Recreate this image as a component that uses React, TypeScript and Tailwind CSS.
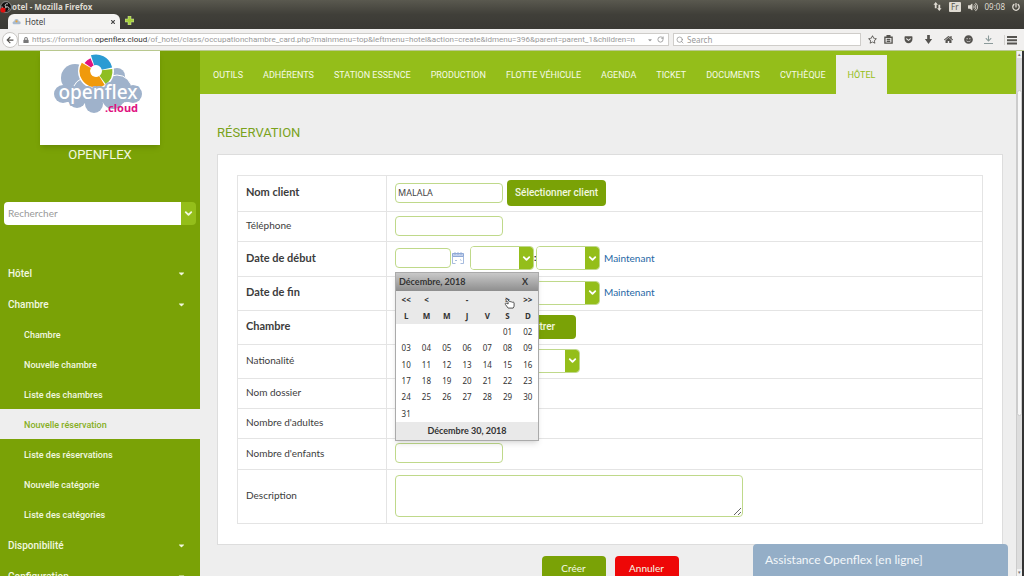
import type { ReactNode } from 'react';
import {
  FaArrowDown,
  FaArrowLeft,
  FaCaretDown,
  FaGetPocket,
  FaHome,
  FaLock,
  FaPowerOff,
  FaRegStar,
  FaSmile,
  FaTimes,
  FaVolumeUp,
} from 'react-icons/fa';
import { ChevronDown, RotateCw, Search } from 'lucide-react';

const topLinks = [
  'Outils',
  'Adhérents',
  'Station essence',
  'Production',
  'Flotte véhicule',
  'Agenda',
  'Ticket',
  'Documents',
  'CVthèque',
  'Hôtel',
];

const roomLinks = [
  'Chambre',
  'Nouvelle chambre',
  'Liste des chambres',
  'Nouvelle réservation',
  'Liste des réservations',
  'Nouvelle catégorie',
  'Liste des catégories',
];

const weekDays = ['L', 'M', 'M', 'J', 'V', 'S', 'D'];

const weeks = [
  ['', '', '', '', '', '01', '02'],
  ['03', '04', '05', '06', '07', '08', '09'],
  ['10', '11', '12', '13', '14', '15', '16'],
  ['17', '18', '19', '20', '21', '22', '23'],
  ['24', '25', '26', '27', '28', '29', '30'],
  ['31', '', '', '', '', '', ''],
];

const inputStyle = "h-5 rounded border border-[#bfd98a] bg-white px-[2px] font-['Noto_Sans',sans-serif] text-[9px] text-[#444] outline-none";

function TitleBar() {
  return (
    <header className="bg-gradient-to-b from-[#5a594f] via-[#403f39] to-[#3a3935] text-[#dfdbd2]">
      <div className="flex h-[13px] items-center justify-between pr-1">
        <div className="flex items-center">
          <svg viewBox="0 0 12 12" className="size-3">
            <circle cx="6" cy="6" r="5.4" fill="#111" stroke="#c8c8c8" strokeWidth=".6" />
            <path d="M6 6C4 4 6 2 8 3M6 6c3-1 4 2 2 3.5M6 6c-1 3-4 2-4-.5" fill="none" stroke="#d8d8d8" strokeWidth="1" />
            <circle cx="3" cy="9" r="2.6" fill="#e01010" />
          </svg>
          <span className="text-[8px] font-bold">otel - Mozilla Firefox</span>
        </div>
        <div className="flex items-center gap-[7px] text-[8px]">
          <svg viewBox="0 0 10 10" className="size-[9px]" fill="currentColor">
            <path d="M3 0l2.5 3H4v4H2V3H.5zM7 10L4.5 7H6V3h2v4h1.500z" />
          </svg>
          <span className="rounded-[1px] bg-[#dfdbd2] px-[2px] leading-[10px] text-[#55534c]">Fr</span>
          <FaVolumeUp className="size-[10px]" />
          <span>09:08</span>
          <FaPowerOff className="size-2" />
        </div>
      </div>
      <div className="flex h-4 items-end pl-2">
        <div className="flex h-[15px] w-[112px] items-center gap-1 rounded-t-md bg-[#f4f3f2] px-1 text-[8px] text-[#444]">
          <svg viewBox="0 0 12 8" className="w-[9px]">
            <path d="M1 6a2 2 0 012-3 3 3 0 016 0 2 2 0 011 4H2z" fill="#a9bbcf" />
            <circle cx="6" cy="3" r="1.500" fill="#e8a33a" />
          </svg>
          <span className="flex-1">Hotel</span>
          <FaTimes className="size-[6px]" />
        </div>
        <button aria-label="Nouvel onglet" className="mb-1 ml-[5px]">
          <svg viewBox="0 0 9 9" className="size-[9px]">
            <path d="M3 0h3v3h3v3H6v3H3V6H0V3h3z" fill="#a6cf3c" stroke="#d5e8a4" strokeWidth=".5" />
          </svg>
        </button>
      </div>
    </header>
  );
}

function ToolBar() {
  return (
    <div className="flex h-[22px] items-center border-b border-[#b9c98f] bg-[#f1f0ef] pl-[2px] text-[#55534f]">
      <button aria-label="Retour" className="flex size-4 items-center justify-center rounded-full border border-[#c9c7c4] bg-white">
        <FaArrowLeft className="size-2" />
      </button>
      <div className="flex h-[13px] min-w-0 flex-1 items-center border border-[#cfcdca] bg-white px-1 text-[8px] text-[#9a9a9a]">
        <FaLock className="mr-[3px] size-[6px] shrink-0 text-[#777]" />
        <span className="min-w-0 flex-1 overflow-hidden font-[Roboto,sans-serif] whitespace-nowrap">
          https://formation.<span className="text-[#333]">openflex.cloud</span>
          /of_hotel/class/occupationchambre_card.php?mainmenu=top&amp;leftmenu=hotel&amp;action=create&amp;idmenu=396&amp;parent=parent_1&amp;children=n
        </span>
        <FaCaretDown className="ml-1 size-[6px] shrink-0" />
        <RotateCw className="ml-1 size-[7px] shrink-0" strokeWidth={3} />
      </div>
      <label className="ml-1 flex h-[13px] w-[188px] items-center gap-[3px] border border-[#cfcdca] bg-white px-[2px]">
        <Search className="size-2 text-[#888]" />
        <input aria-label="Search" placeholder="Search" className="min-w-0 flex-1 text-[8px] outline-none placeholder:text-[#999]" />
      </label>
      <div className="flex items-center gap-[11px] px-[7px]">
        <FaRegStar className="-mr-1 size-[9px]" />
        <svg viewBox="0 0 10 10" className="size-[9px]" fill="none" stroke="currentColor" strokeWidth="1.500">
          <path d="M1 2.500h8v6.500H1zM3.500 2V.8h3V2M3 5h4M3 7h4" />
        </svg>
        <FaGetPocket className="size-[9px]" />
        <svg viewBox="0 0 10 10" className="size-[9px]" fill="currentColor">
          <path d="M3.500 0h3v4.500H9L5 10 1 4.500h2.500z" />
        </svg>
        <FaHome className="size-[9px]" />
        <FaSmile className="size-[9px]" />
        <FaArrowDown className="size-[9px] border-b border-current pb-px text-[#8b9a9a]" />
        <span className="border-l border-[#d4d2cf] pl-[2px]">
          <svg viewBox="0 0 10 10" className="size-[10px]" fill="currentColor">
            <path d="M0 1h10v2H0zM0 4.200h10v2H0zM0 7.400h10v2H0z" />
          </svg>
        </span>
      </div>
    </div>
  );
}

function Logo() {
  return (
    <svg viewBox="0 0 120 94" className="w-full" role="img" aria-label="openflex.cloud">
      <g fill="#9fb2cb">
        <circle cx="35" cy="27" r="14" />
        <circle cx="77" cy="25" r="8" />
        <g stroke="#fff" strokeWidth="1">
          <circle cx="77" cy="39" r="15" />
          <circle cx="46" cy="40" r="13" />
        </g>
        <circle cx="54" cy="53" r="9" />
        <circle cx="37" cy="48" r="9" />
        <circle cx="73" cy="47" r="11" />
        <circle cx="23" cy="43" r="9" />
        <circle cx="93" cy="43" r="9" />
        <rect x="24" y="36" width="70" height="15" />
      </g>
      <circle cx="56" cy="20" r="18" fill="#fff" />
      <g fill="none" strokeWidth="10.500">
        <circle cx="56" cy="20" r="11.200" pathLength="360" stroke="#2b9bd3" strokeDasharray="96 264" transform="rotate(-108 56 20)" />
        <circle cx="56" cy="20" r="11.200" pathLength="360" stroke="#8fbe22" strokeDasharray="60 300" transform="rotate(-7 56 20)" />
        <circle cx="56" cy="20" r="11.200" pathLength="360" stroke="#f09a0c" strokeDasharray="152 208" transform="rotate(58 56 20)" />
        <circle cx="56" cy="20" r="10" pathLength="360" strokeWidth="8" stroke="#e0127f" strokeDasharray="32 328" transform="rotate(215 56 20)" />
      </g>
      <text
        x="58"
        y="48"
        textAnchor="middle"
        fontFamily="Noto Sans, sans-serif"
        fontSize="19"
        fontWeight="500"
        fill="#fff"
        stroke="#9fb2cb"
        strokeWidth="4"
        strokeLinejoin="round"
        paintOrder="stroke"
      >
        openflex
      </text>
      <text x="98" y="61" textAnchor="end" fontFamily="Noto Sans, sans-serif" fontSize="11" fontWeight="bold" fill="#e0127f">
        .cloud
      </text>
    </svg>
  );
}

function MenuGroup({ title, children }: { title: string; children?: ReactNode }) {
  return (
    <li>
      <a href="#" className="flex h-[31px] items-center justify-between pt-[2px] pr-[14px] pl-2 text-[10px] font-medium">
        {title}
        <FaCaretDown className="size-[9px]" />
      </a>
      {children}
    </li>
  );
}

function Sidebar() {
  return (
    <aside className="w-[200px] shrink-0 bg-[#7aa206] font-[Roboto,sans-serif] text-[#f2f8e0]">
      <div className="mx-auto w-[120px] bg-white shadow-md">
        <Logo />
      </div>
      <p className="text-center text-[13px] leading-5">OPENFLEX</p>
      <div className="mx-1 mt-[37px] mb-8 flex h-[23px] overflow-hidden rounded">
        <input
          aria-label="Rechercher"
          placeholder="Rechercher"
          className="min-w-0 flex-1 bg-white px-1 font-[Lato,sans-serif] text-[10px] text-[#555] outline-none placeholder:text-[#999]"
        />
        <button aria-label="Lancer la recherche" className="flex w-[15px] items-center justify-center bg-[#94be1a]">
          <ChevronDown className="size-[11px]" strokeWidth={4} />
        </button>
      </div>
      <ul>
        <MenuGroup title="Hôtel" />
        <MenuGroup title="Chambre">
          <ul>
            {roomLinks.map((link) => (
              <li key={link}>
                <a
                  href="#"
                  className={`flex h-[30px] items-center pt-[3px] pl-6 text-[9px] font-medium ${
                    link === 'Nouvelle réservation' ? 'bg-[#eee] text-[#86ae22]' : ''
                  }`}
                >
                  {link}
                </a>
              </li>
            ))}
          </ul>
        </MenuGroup>
        <MenuGroup title="Disponibilité" />
        <MenuGroup title="Configuration" />
      </ul>
    </aside>
  );
}

function TopNav() {
  return (
    <nav className="flex h-[43px] items-end bg-[#94be1a] pl-[3px] font-[Roboto,sans-serif] text-[9px] text-[#f5fae6] uppercase">
      {topLinks.map((link) => (
        <a
          key={link}
          href="#"
          className={`flex h-[39px] items-center pt-[2px] whitespace-nowrap ${
            link === 'Hôtel' ? 'bg-[#eee] px-3 text-[#94be1a]' : 'px-[10px]'
          }`}
        >
          {link}
        </a>
      ))}
    </nav>
  );
}

function Select({ id, label, className }: { id?: string; label?: string; className: string }) {
  return (
    <span className={`relative inline-flex h-6 overflow-hidden rounded border border-[#bfd98a] ${className}`}>
      <select id={id} aria-label={label} className="w-full appearance-none bg-white outline-none" />
      <span className="pointer-events-none absolute inset-y-0 right-0 flex w-[14px] items-center justify-center bg-[#94be1a] text-white">
        <ChevronDown className="size-[11px]" strokeWidth={4} />
      </span>
    </span>
  );
}

function Row({ label, htmlFor, bold, height, children }: {
  label: string;
  htmlFor: string;
  bold?: boolean;
  height: string;
  children: ReactNode;
}) {
  return (
    <tr className={`border border-[#e4e4e4] ${height}`}>
      <th scope="row" className="w-[149px] border-r border-[#e4e4e4] pb-[2px] pl-2 text-left font-normal text-[#3c3c3c]">
        <label htmlFor={htmlFor} className={bold ? 'block text-[11px] font-bold' : 'block text-[10px]'}>{label}</label>
      </th>
      <td className="pb-[2px] pl-2">
        <div className="flex items-center">{children}</div>
      </td>
    </tr>
  );
}

function CalendarIcon() {
  return (
    <svg viewBox="0 0 12 12" className="size-3" fill="none" stroke="#8fa9d6">
      <path d="M.5 1.500h11v3H.5z" fill="#c3d1ec" />
      <path d="M.5 4.500v7h3M8.500 11.500h3v-7M3 0v3M6 0v3M9 0v3M3 8.500h2M8 7.500l1.500 1" strokeWidth=".8" />
    </svg>
  );
}

function HandCursor() {
  return (
    <svg viewBox="0 0 12 12" className="pointer-events-none absolute top-[25px] left-[108px] size-[11px]">
      <path
        d="M2.500 1.200c-1 .2-.9 1.300 0 1.600L4.500 5v1.500L2.500 5.700c-1-.3-1.700.6-1 1.300L4.500 11h5.500l1-2V5.500c0-.9-1-1.200-1.500-.7-.2-.8-1.300-.9-1.700-.3-.3-.7-1.300-.7-1.600-.1L3.700 1.500z"
        fill="#fff"
        stroke="#333"
        strokeWidth=".9"
      />
    </svg>
  );
}

function DatePicker() {
  return (
    <div className="absolute top-[26px] left-0 z-10 w-36 border border-[#aaa] bg-white text-[8px] text-[#333] shadow-md">
      <div className="flex h-[18px] items-center justify-between bg-gradient-to-b from-[#c9c9c9] to-[#8e8e8e] pr-[10px] pl-[3px] text-[9px] font-bold">
        <span>Décembre, 2018</span>
        <button aria-label="Fermer">X</button>
      </div>
      <table className="h-[131px] w-full table-fixed text-center font-['Noto_Sans',sans-serif]">
        <thead className="bg-[#e9e9e9]">
          <tr className="h-[17px] font-bold">
            <td><button>&lt;&lt;</button></td>
            <td><button>&lt;</button></td>
            <td />
            <td><button>-</button></td>
            <td />
            <td><button>&gt;</button></td>
            <td><button>&gt;&gt;</button></td>
          </tr>
          <tr className="h-4">
            {weekDays.map((day, i) => (
              <th key={i} className="font-bold">{day}</th>
            ))}
          </tr>
        </thead>
        <tbody>
          {weeks.map((week, i) => (
            <tr key={i} className="h-4">
              {week.map((day, j) => (
                <td key={j}>{day}</td>
              ))}
            </tr>
          ))}
        </tbody>
      </table>
      <p className="bg-[#e9e9e9] text-center text-[9px] leading-[18px] font-bold">Décembre 30, 2018</p>
      <HandCursor />
    </div>
  );
}

function TimeFields({ name, children }: { name: string; children?: ReactNode }) {
  return (
    <div className="relative flex items-center text-[9px]">
      <input id={name} className={`w-14 ${inputStyle}`} />
      <button aria-label="Choisir une date" className="mr-[6px] ml-px">
        <CalendarIcon />
      </button>
      <Select label="Heure" className="w-16" />
      <span className="w-[2px] font-bold">:</span>
      <Select label="Minute" className="w-16" />
      <a href="#" className="ml-1 text-[10px] text-[#1f68a5]">Maintenant</a>
      {children}
    </div>
  );
}

function ReservationForm() {
  return (
    <form className="font-[Lato,sans-serif]">
      <section className="border border-[#ddd] bg-white px-[19px] py-5">
        <table className="w-full border-collapse">
          <tbody>
            <Row label="Nom client" htmlFor="client" bold height="h-9">
              <input id="client" defaultValue="MALALA" className={`w-[108px] ${inputStyle}`} />
              <button type="button" className="ml-1 h-[26px] rounded bg-[#7aa206] px-2 font-[Roboto,sans-serif] text-[10px] font-medium text-[#f2f8e0]">
                Sélectionner client
              </button>
            </Row>
            <Row label="Téléphone" htmlFor="phone" height="h-[30px]">
              <input id="phone" type="tel" className={`w-[108px] ${inputStyle}`} />
            </Row>
            <Row label="Date de début" htmlFor="start" bold height="h-[35px]">
              <TimeFields name="start">
                <DatePicker />
              </TimeFields>
            </Row>
            <Row label="Date de fin" htmlFor="end" bold height="h-[34px]">
              <TimeFields name="end" />
            </Row>
            <Row label="Chambre" htmlFor="room" bold height="h-[34px]">
              <Select id="room" className="w-[108px]" />
              <button type="button" className="ml-[5px] h-6 w-[68px] rounded bg-[#7aa206] font-[Roboto,sans-serif] text-[10px] font-medium text-[#f2f8e0]">
                Filtrer
              </button>
            </Row>
            <Row label="Nationalité" htmlFor="nationality" height="h-[34px]">
              <Select id="nationality" className="w-[185px]" />
            </Row>
            <Row label="Nom dossier" htmlFor="file" height="h-[30px]">
              <input id="file" className={`w-[108px] ${inputStyle}`} />
            </Row>
            <Row label="Nombre d'adultes" htmlFor="adults" height="h-[30px]">
              <input id="adults" className={`w-[108px] ${inputStyle}`} />
            </Row>
            <Row label="Nombre d'enfants" htmlFor="children" height="h-[31px]">
              <input id="children" className={`w-[108px] ${inputStyle}`} />
            </Row>
            <Row label="Description" htmlFor="description" height="h-[54px]">
              <textarea id="description" className="h-[42px] w-[348px] rounded border border-[#bfd98a] bg-white p-1 text-[9px] outline-none" />
            </Row>
          </tbody>
        </table>
      </section>
      <div className="mt-[11px] flex justify-center gap-[9px] text-[10px] text-[#f5fae6]">
        <button className="h-6 w-16 rounded bg-[#7aa206]">Créer</button>
        <button type="button" className="h-6 w-16 rounded bg-[#ee0707]">Annuler</button>
      </div>
    </form>
  );
}

function ScrollBar() {
  return (
    <div className="flex w-2 shrink-0 flex-col items-center border-r-2 border-l border-r-[#333] border-l-[#ccc] bg-[#ddd]">
      <div className="h-[7px] w-full bg-[#f2f2f2] text-center text-[5px] leading-[7px] text-[#777]">▴</div>
      <div className="mt-8 h-[62%] w-full rounded-sm border border-[#ccc] bg-[#f7f7f7]" />
      <div className="mt-auto h-[7px] w-full bg-[#f2f2f2] text-center text-[5px] leading-[7px] text-[#777]">▾</div>
    </div>
  );
}

export default function App() {
  return (
    <div className="flex h-screen flex-col overflow-hidden bg-[#eee] font-['Noto_Sans',sans-serif]">
      <TitleBar />
      <ToolBar />
      <div className="flex min-h-0 flex-1">
        <Sidebar />
        <div className="min-w-0 flex-1">
          <TopNav />
          <main className="pt-[29px] pr-[13px] pl-[17px]">
            <h1 className="mb-3 font-[Roboto,sans-serif] text-[13px] leading-[19px] text-[#7aa21c] uppercase">Réservation</h1>
            <ReservationForm />
          </main>
        </div>
        <ScrollBar />
      </div>
      <a
        href="#"
        className="fixed right-4 bottom-0 flex h-8 w-[255px] items-center rounded-t bg-[#94aec7] px-3 font-[Lato,sans-serif] text-[12px] text-[#f3f7fa]"
      >
        Assistance Openflex [en ligne]
      </a>
    </div>
  );
}
